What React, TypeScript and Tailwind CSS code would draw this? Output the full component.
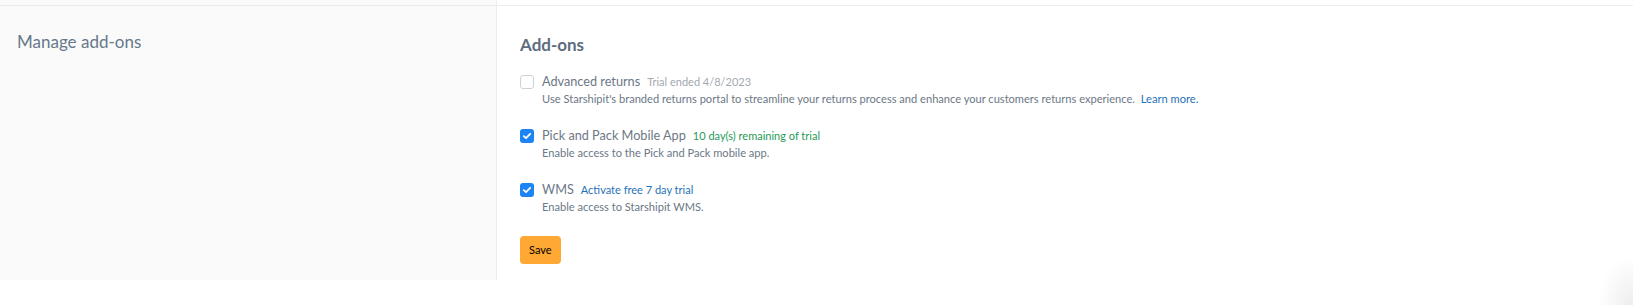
import React from "react";

type AddOn = {
  name: string;
  badge: string;
  badgeClass: string;
  description: React.ReactNode;
  checked: boolean;
};

const ADD_ONS: AddOn[] = [
  {
    name: "Advanced returns",
    badge: "Trial ended 4/8/2023",
    badgeClass: "text-[#a2a9b0]",
    description: (
      <>
        Use Starshipit's branded returns portal to streamline your returns process and enhance your customers returns experience.{" "}
        <a className="ml-[3px] text-[#1f72b6]">Learn more.</a>
      </>
    ),
    checked: false,
  },
  {
    name: "Pick and Pack Mobile App",
    badge: "10 day(s) remaining of trial",
    badgeClass: "text-[#1e9a57]",
    description: "Enable access to the Pick and Pack mobile app.",
    checked: true,
  },
  {
    name: "WMS",
    badge: "Activate free 7 day trial",
    badgeClass: "text-[#1f72b6]",
    description: "Enable access to Starshipit WMS.",
    checked: true,
  },
];

function Checkbox({ checked }: { checked: boolean }) {
  if (checked) {
    return (
      <span className="mt-[4px] flex h-[14px] w-[14px] shrink-0 items-center justify-center rounded-[3px] bg-[#1d84f5]">
        <svg width="10" height="10" viewBox="0 0 10 10">
          <path d="M1.8 5.2 L4 7.2 L8.2 2.8" fill="none" stroke="white" strokeWidth="1.8" strokeLinecap="round" strokeLinejoin="round" />
        </svg>
      </span>
    );
  }
  return <span className="mt-[4px] h-[14px] w-[14px] shrink-0 rounded-[3px] border border-[#cfd2d5] bg-white" />;
}

export default function App() {
  return (
    <div className="relative h-[305px] w-[1633px] overflow-hidden bg-white font-['Lato',sans-serif]">
      {/* tail of the previous row */}
      <div className="flex h-[5px]">
        <div className="w-[497px] shrink-0 border-r border-[#ececec] bg-[#fafafa]" />
        <div className="flex-1" />
      </div>

      <div className="flex border-t border-[#ececec]">
        <div className="w-[497px] shrink-0 border-r border-[#ececec] bg-[#fafafa] pl-[17px] pt-[24px]">
          <p className="text-[17px] leading-[24px] text-[#66788a]">Manage add-ons</p>
        </div>

        <div className="flex-1 pl-[23px] pt-[27px] pb-[16px]">
          <h2 className="text-[17px] font-bold leading-[24px] text-[#5d6d7e]">Add-ons</h2>

          <div className="mt-[14px] flex flex-col gap-[18px]">
            {ADD_ONS.map((a) => (
              <label key={a.name} className="flex gap-[8px]">
                <Checkbox checked={a.checked} />
                <div>
                  <div className="flex h-[20px] items-baseline gap-[7px] leading-[20px]">
                    <span className="text-[12.7px] text-[#6c7886]">{a.name}</span>
                    <span className={`text-[11px] ${a.badgeClass}`}>{a.badge}</span>
                  </div>
                  <p className="text-[11.1px] leading-[16px] text-[#6c7886]">{a.description}</p>
                </div>
              </label>
            ))}
          </div>

          <button className="mt-[21px] block h-[28px] rounded-[4px] bg-[#ffa834] px-[9px] text-[11px] text-black">
            Save
          </button>
        </div>
      </div>

      <div className="pointer-events-none absolute bottom-0 right-0 h-[50px] w-[36px] bg-[radial-gradient(ellipse_at_bottom_right,rgba(0,0,0,0.07),transparent_70%)]" />
    </div>
  );
}
